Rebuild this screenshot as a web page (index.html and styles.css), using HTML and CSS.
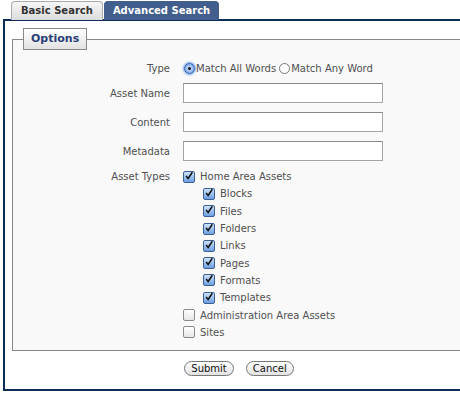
FILE: index.html
```html
<!DOCTYPE html>
<html>
	<head>
		<meta charset="utf-8">
		<title>Advanced Search</title>
		<link rel="stylesheet" href="styles.css">
	</head>
	<body>
		<div class="tabs">
			<div class="tab">Basic Search</div>
			<div class="tab tab-active">Advanced Search</div>
		</div>
		<div class="panel">
			<fieldset class="options">
				<legend>Options</legend>
				<div class="row row-type">
					<label class="row-label">Type</label>
					<div class="row-field">
						<span class="radio radio-on"><span class="dot"></span></span><span class="opt">Match All Words</span>
						<span class="radio"></span><span class="opt">Match Any Word</span>
					</div>
				</div>
				<div class="row row-input">
					<label class="row-label">Asset Name</label>
					<div class="row-field"><input type="text" class="text-input"></div>
				</div>
				<div class="row row-input">
					<label class="row-label">Content</label>
					<div class="row-field"><input type="text" class="text-input"></div>
				</div>
				<div class="row row-input">
					<label class="row-label">Metadata</label>
					<div class="row-field"><input type="text" class="text-input"></div>
				</div>
				<div class="row row-types">
					<label class="row-label">Asset Types</label>
					<div class="row-field">
						<div class="check-item"><span class="check check-on"><svg viewBox="0 0 12 12" width="12" height="12"><path d="M2.5 6 L5 9 L10 1.5" fill="none" stroke="#111" stroke-width="1.8"/></svg></span>Home Area Assets</div>
						<div class="sub">
							<div class="check-item"><span class="check check-on"><svg viewBox="0 0 12 12" width="12" height="12"><path d="M2.5 6 L5 9 L10 1.5" fill="none" stroke="#111" stroke-width="1.8"/></svg></span>Blocks</div>
							<div class="check-item"><span class="check check-on"><svg viewBox="0 0 12 12" width="12" height="12"><path d="M2.5 6 L5 9 L10 1.5" fill="none" stroke="#111" stroke-width="1.8"/></svg></span>Files</div>
							<div class="check-item"><span class="check check-on"><svg viewBox="0 0 12 12" width="12" height="12"><path d="M2.5 6 L5 9 L10 1.5" fill="none" stroke="#111" stroke-width="1.8"/></svg></span>Folders</div>
							<div class="check-item"><span class="check check-on"><svg viewBox="0 0 12 12" width="12" height="12"><path d="M2.5 6 L5 9 L10 1.5" fill="none" stroke="#111" stroke-width="1.8"/></svg></span>Links</div>
							<div class="check-item"><span class="check check-on"><svg viewBox="0 0 12 12" width="12" height="12"><path d="M2.5 6 L5 9 L10 1.5" fill="none" stroke="#111" stroke-width="1.8"/></svg></span>Pages</div>
							<div class="check-item"><span class="check check-on"><svg viewBox="0 0 12 12" width="12" height="12"><path d="M2.5 6 L5 9 L10 1.5" fill="none" stroke="#111" stroke-width="1.8"/></svg></span>Formats</div>
							<div class="check-item"><span class="check check-on"><svg viewBox="0 0 12 12" width="12" height="12"><path d="M2.5 6 L5 9 L10 1.5" fill="none" stroke="#111" stroke-width="1.8"/></svg></span>Templates</div>
						</div>
						<div class="check-item"><span class="check"></span>Administration Area Assets</div>
						<div class="check-item"><span class="check"></span>Sites</div>
					</div>
				</div>
			</fieldset>
			<div class="buttons">
				<button class="btn">Submit</button>
				<button class="btn">Cancel</button>
			</div>
		</div>
	</body>
</html>
```

FILE: styles.css
```css
html,
body {
	margin: 0;
	background-color: #ffffff;
	overflow: hidden;
	font-family: "DejaVu Sans", Verdana, sans-serif;
	font-size: 10px;
	color: #505050;
}

.tabs {
	display: flex;
	gap: 1px;
	height: 19px;
	padding-left: 11px;
}

.tab {
	height: 18px;
	margin-top: 1px;
	padding: 0 9px;
	border: 1px solid #aaaaaa;
	border-bottom: none;
	border-radius: 4px 4px 0 0;
	background: linear-gradient(#f6f6f6, #dcdcdc);
	font-weight: bold;
	font-size: 10px;
	line-height: 18px;
	color: #333333;
}

.tab-active {
	padding: 0 8px;
	background: #425e8d;
	border-color: #425e8d;
	color: #ffffff;
}

.panel {
	width: 463px;
	height: 372px;
	margin-left: 3px;
	padding-left: 7px;
	box-sizing: border-box;
	border: 2px solid #0d2d58;
	border-right: none;
}

.options {
	margin: 7px 0 0 0;
	padding: 10px 0 9px 10px;
	border: 1px solid #888888;
	border-right: none;
	background-color: #f9f9f9;
	min-width: 0;
}

.options legend {
	height: 20px;
	padding: 0 7px;
	border: 1px solid #888888;
	background: linear-gradient(#ffffff, #e2e2e2);
	font-weight: bold;
	font-size: 11px;
	line-height: 20px;
	color: #2b3f78;
}

.row {
	display: flex;
	gap: 13px;
}

.row-label {
	width: 147px;
	flex-shrink: 0;
	text-align: right;
}

.row-type {
	height: 17px;
	align-items: center;
}

.row-type .row-field {
	display: flex;
	align-items: center;
}

.row-input {
	height: 20px;
	margin-top: 9px;
	align-items: center;
}

.row-type + .row-input {
	margin-top: 6px;
}

.text-input {
	display: block;
	width: 200px;
	height: 20px;
	box-sizing: border-box;
	margin: 0;
	border: 1px solid #a5a5a5;
	border-top-color: #888888;
	background: #ffffff;
}

.row-types {
	margin-top: 7px;
}

.row-types .row-label {
	line-height: 17px;
}

.check-item {
	display: flex;
	align-items: center;
	height: 17.3px;
}

.sub {
	padding-left: 20px;
}

.check {
	display: inline-flex;
	width: 10px;
	height: 10px;
	margin-right: 5px;
	border: 1px solid #8a8a8a;
	border-radius: 2px;
	background: linear-gradient(#ffffff, #e6e6e6);
	overflow: visible;
}

.check svg {
	margin: -2px 0 0 0;
}

.check-on {
	border-color: #3a5f96;
	background: linear-gradient(#cfe3fb, #6d9fe0);
}

.radio {
	display: inline-flex;
	align-items: center;
	justify-content: center;
	width: 9px;
	height: 9px;
	margin: 0 1px 0 1px;
	border: 1px solid #777777;
	border-radius: 50%;
	background: #ffffff;
}

.opt {
	margin-right: 2px;
}

.radio-on {
	border-color: #2b5da8;
	background: radial-gradient(#dcebff, #5f95e0);
	box-shadow: 0 0 2px 1px #7aa7ea;
}

.radio-on .dot {
	width: 3px;
	height: 3px;
	border-radius: 50%;
	background: #111111;
}

.buttons {
	display: flex;
	justify-content: center;
	gap: 12px;
	margin-top: 10px;
}

.btn {
	height: 15px;
	padding: 0 6px;
	border: 1px solid #777777;
	border-radius: 8px;
	background: linear-gradient(#ffffff, #e2e2e2);
	font-family: "DejaVu Sans", sans-serif;
	font-size: 10px;
	line-height: 13px;
	color: #111111;
}
```
